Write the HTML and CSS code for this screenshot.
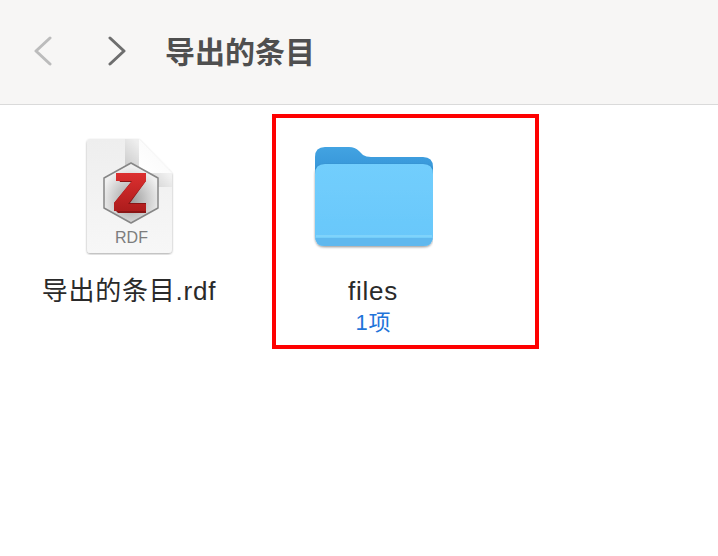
FILE: index.html
```html
<!DOCTYPE html>
<html lang="zh">
<head>
<meta charset="utf-8">
<title>导出的条目</title>
<link rel="stylesheet" href="styles.css">
</head>
<body>
<header class="toolbar">
  <svg class="nav nav-back" width="20" height="30" viewBox="0 0 20 30"><path d="M17 2 L3 15 L17 28" /></svg>
  <svg class="nav nav-forward" width="20" height="30" viewBox="0 0 20 30"><path d="M3 2 L17 15 L3 28" /></svg>
  <h1 class="title">导出的条目</h1>
</header>
<main class="files">
  <div class="item">
    <svg class="icon" width="120" height="120" viewBox="0 0 120 120">
      <defs>
        <linearGradient id="page" x1="0" y1="0" x2="0" y2="1"><stop offset="0" stop-color="#eeeeee"/><stop offset="1" stop-color="#f7f7f7"/></linearGradient>
        <linearGradient id="fold" x1="0" y1="1" x2="1" y2="0"><stop offset="0" stop-color="#ffffff"/><stop offset="0.7" stop-color="#fafafa"/><stop offset="1" stop-color="#dcdcdc"/></linearGradient>
        <linearGradient id="foldshade" x1="1" y1="0" x2="0" y2="1"><stop offset="0.4" stop-color="#000" stop-opacity="0"/><stop offset="0.8" stop-color="#000" stop-opacity="0.16"/></linearGradient>
        <radialGradient id="hex" cx="0.5" cy="0.62" r="0.55"><stop offset="0" stop-color="#9b9b9b"/><stop offset="0.6" stop-color="#cfcfcf"/><stop offset="1" stop-color="#f0f0f0"/></radialGradient>
        <linearGradient id="zed" x1="0" y1="0" x2="0" y2="1"><stop offset="0" stop-color="#dc2f2f"/><stop offset="1" stop-color="#ad1c1c"/></linearGradient>
        <filter id="docshadow" x="-10%" y="-10%" width="120%" height="120%"><feDropShadow dx="0" dy="1" stdDeviation="1" flood-color="#000" flood-opacity="0.35"/></filter>
      </defs>
      <path d="M21 4 H70 L103 38 V114 Q103 118 99 118 H21 Q18 118 18 114 V8 Q18 4 21 4 Z" fill="url(#page)" filter="url(#docshadow)"/>
      <path d="M56 4 H70 V38 H103 V52 H56 Z" fill="url(#foldshade)"/>
      <path d="M70 4 L103 38 H78 Q70 38 70 30 Z" fill="url(#fold)"/>
      <path d="M62 28 L89 43 V73 L62 88 L35 73 V43 Z" fill="url(#hex)" stroke="#868686" stroke-width="1.5" stroke-linejoin="round"/>
      <path d="M47 38 H77 V46 L61 68 H77 V78 H49 L45 74 V68 L62 47 H51 Z" fill="#8a1515"/>
      <path d="M47 38 H77 V46 L59 69 H77 V76 H45 V68 L63 46 H47 Z" fill="url(#zed)"/>
      <text class="doc-type" x="62.5" y="108">RDF</text>
    </svg>
    <div class="label">导出的条目.rdf</div>
  </div>
  <div class="item">
    <svg class="icon" width="120" height="120" viewBox="0 0 120 120">
      <defs>
        <linearGradient id="back" x1="0" y1="0" x2="0" y2="1"><stop offset="0" stop-color="#42a3e2"/><stop offset="1" stop-color="#2f8ed2"/></linearGradient>
        <linearGradient id="front" x1="0" y1="0" x2="0" y2="1"><stop offset="0" stop-color="#72cefd"/><stop offset="1" stop-color="#68c7fa"/></linearGradient>
        <filter id="foldershadow" x="-10%" y="-10%" width="120%" height="120%"><feDropShadow dx="0" dy="1.2" stdDeviation="1.2" flood-color="#000" flood-opacity="0.4"/></filter>
        <filter id="blur1"><feGaussianBlur stdDeviation="0.6"/></filter>
      </defs>
      <path d="M2 22 Q2 12 12 12 H36 Q42 12 46 16 L50 20 Q53 22 58 22 H110 Q120 22 120 32 V50 H2 Z" fill="url(#back)"/>
      <path d="M2 39 Q2 29 12 29 H110 Q120 29 120 39 V101 Q120 111 110 111 H12 Q2 111 2 101 Z" fill="url(#front)" filter="url(#foldershadow)"/>
      <path d="M2 103 H120 V101 Q120 111 110 111 H12 Q2 111 2 101 Z" fill="#5fb8ee"/>
      <rect x="3" y="100" width="116" height="2.5" fill="#7fd3fb" filter="url(#blur1)"/>
    </svg>
    <div class="label">files</div>
    <div class="meta">1项</div>
  </div>
  <div class="highlight"></div>
</main>
</body>
</html>
```
FILE: styles.css
```css
* { box-sizing: border-box; }
html, body { margin: 0; padding: 0; background: #fff; }
body {
  width: 718px;
  height: 556px;
  overflow: hidden;
  font-family: "Liberation Sans", "Noto Sans CJK SC", sans-serif;
}
.toolbar {
  height: 105px;
  background: #f7f6f5;
  border-bottom: 1px solid #dadada;
  display: flex;
  align-items: center;
  padding-left: 33px;
}
.nav { fill: none; stroke-width: 3; stroke-linecap: round; stroke-linejoin: round; }
.nav-back { stroke: #bcbcbc; margin-top: -2px; }
.nav-forward { stroke: #6e6e6e; margin-left: 54px; margin-top: -2px; }
.title {
  margin: -4px 0 0 38px;
  font-family: "Noto Sans CJK SC", sans-serif;
  font-size: 30px;
  font-weight: 600;
  line-height: 40px;
  color: #4f4f4f;
}
.files {
  position: relative;
  display: grid;
  grid-template-columns: 244px 244px;
  padding: 30px 0 0 7px;
}
.item { display: flex; flex-direction: column; align-items: center; }
.icon { display: block; }
.label { margin-top: 17px; font-size: 26px; line-height: 38px; letter-spacing: 0.75px; color: #2a2a2a; }
.meta { font-size: 22px; line-height: 24px; margin: 1px 0 0 1px; letter-spacing: 1px; color: #1f74d9; }
.doc-type { font-size: 16px; fill: #7d7d7d; text-anchor: middle; font-family: "Liberation Sans", sans-serif; }
.highlight {
  position: absolute;
  left: 272px;
  top: 9px;
  width: 267px;
  height: 235px;
  border: 4px solid #fe0000;
}
```
